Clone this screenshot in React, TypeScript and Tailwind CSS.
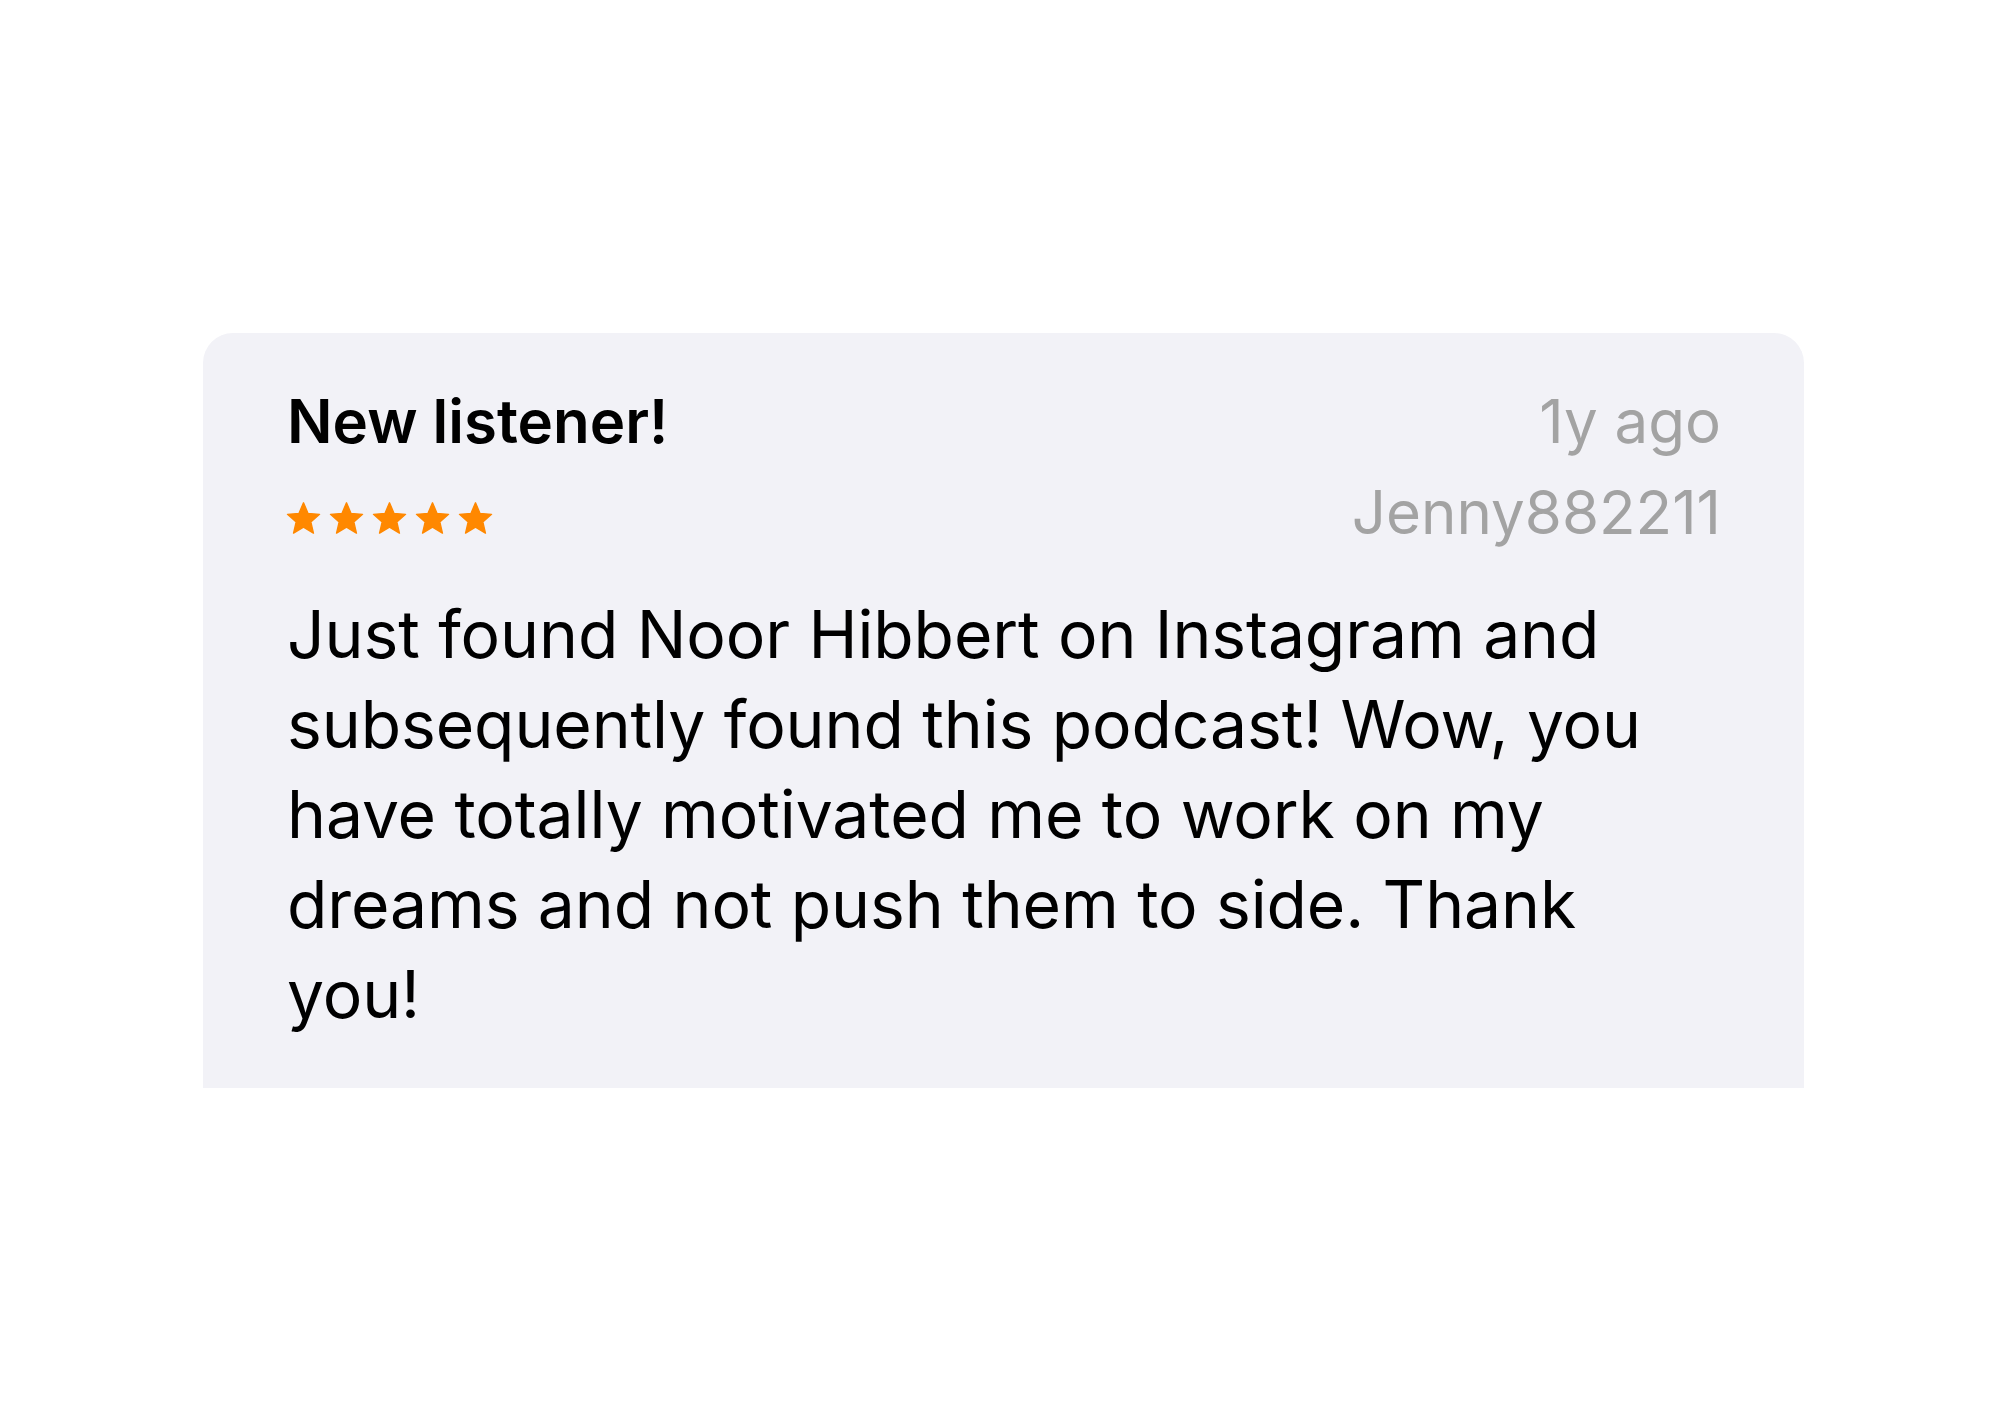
function Stars({ count }: { count: number }) {
  return (
    <div className="-ml-[2px] flex items-center gap-[6px]">
      {Array.from({ length: count }).map((_, i) => (
        <svg key={i} viewBox="0 0 24 24" className="h-[37px] w-[37px]">
          <path
            d="M12 1.8l2.95 6.9 7.45.6-5.65 4.9 1.7 7.3L12 17.6l-6.45 3.9 1.7-7.3L1.6 9.3l7.45-.6z"
            fill="#ff8800"
            stroke="#ff8800"
            strokeWidth="0.9"
            strokeLinejoin="round"
          />
        </svg>
      ))}
    </div>
  );
}

export default function App() {
  return (
    <div className="h-[1414px] w-full bg-white pl-[203px] pt-[333px] font-['Inter',sans-serif]">
      <div className="h-[755px] w-[1601px] rounded-t-[30px] bg-[#f2f2f7] pl-[84px] pr-[83px] pt-[48px]">
        <div className="flex justify-between">
          <div className="flex flex-col">
            <h2 className="text-[60px] font-semibold leading-[80px] text-black">New listener!</h2>
            <div className="mt-[39px]">
              <Stars count={5} />
            </div>
          </div>
          <div className="flex flex-col items-end text-[60px] text-[#a3a3a3]">
            <span className="leading-[80px]">1y ago</span>
            <span className="mt-[6px] leading-[90px]">Jenny882211</span>
          </div>
        </div>
        <p className="mt-[32px] pr-[20px] text-[66px] leading-[90px] tracking-[-0.1px] text-black">
          Just found Noor Hibbert on Instagram and subsequently found this podcast! Wow, you have
          totally motivated me to work on my dreams and not push them to side. Thank you!
        </p>
      </div>
    </div>
  );
}
